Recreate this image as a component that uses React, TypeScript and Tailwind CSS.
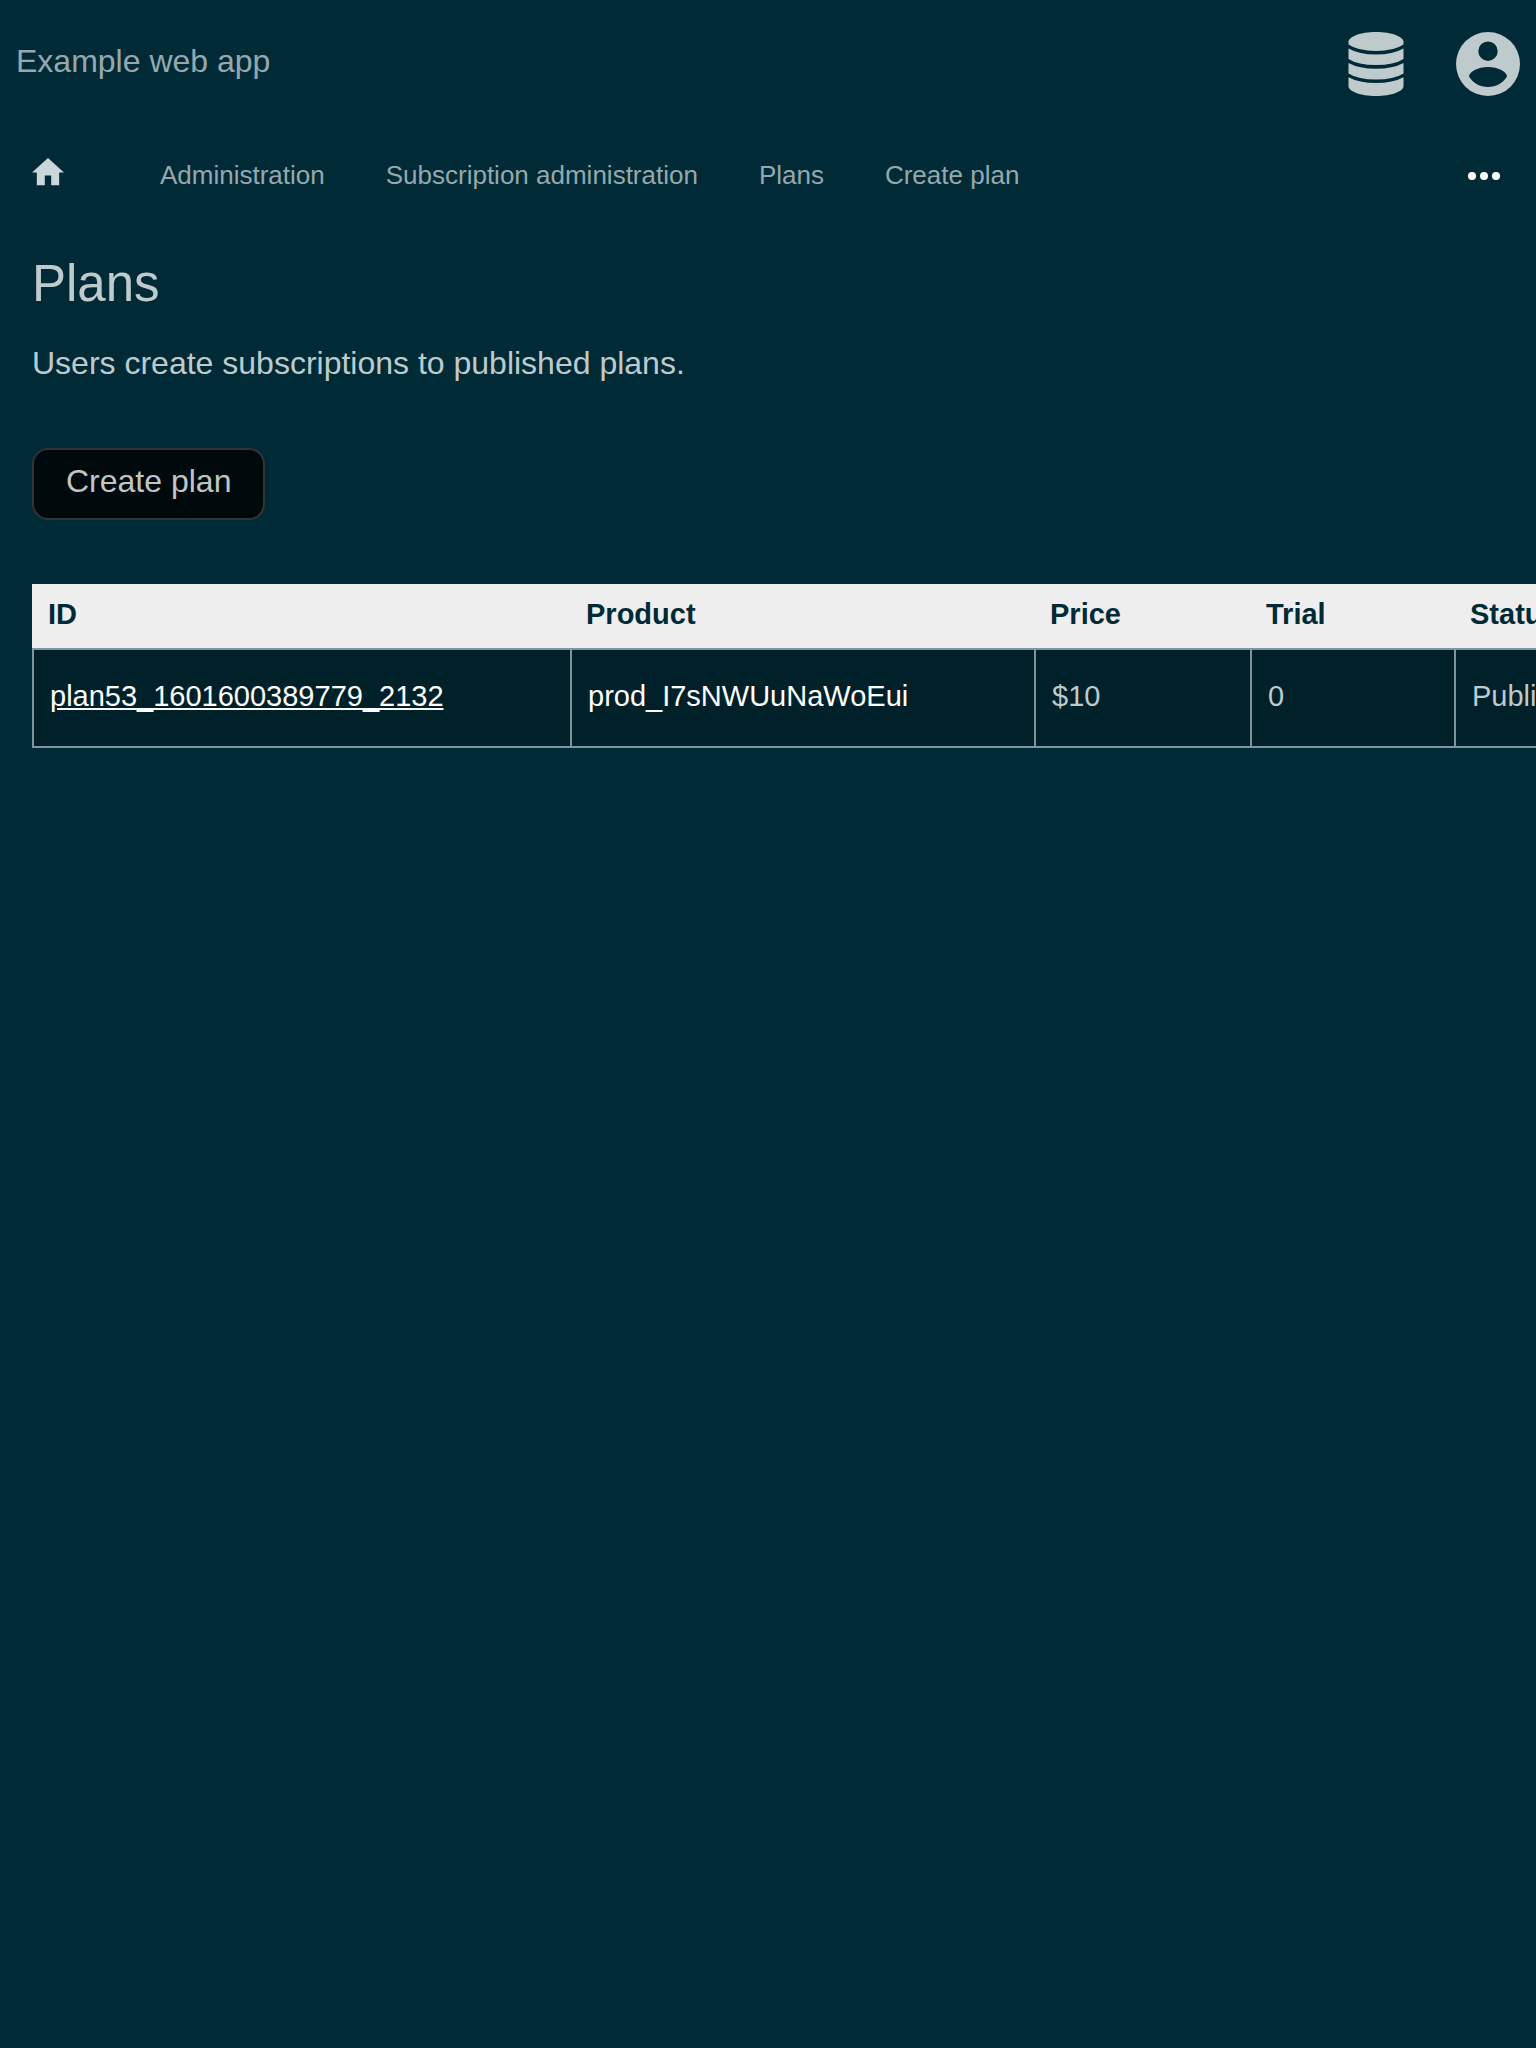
const navLinks = ["Administration", "Subscription administration", "Plans", "Create plan"];

function DatabaseIcon() {
  return (
    <svg viewBox="0 0 56 64" className="h-16 w-14" fill="currentColor" aria-hidden="true">
      <path d="M28 0C43.500 0 55.500 4.600 55.500 10V12.500Q46 19 28 19Q10 19 0.500 12.500V10C0.500 4.600 12.500 0 28 0Z" />
      <path d="M0.500 16.500Q11 22.500 28 22.500Q45 22.500 55.500 16.500V27Q46 33 28 33Q10 33 0.500 27Z" />
      <path d="M0.500 31Q11 36.800 28 36.800Q45 36.800 55.500 31V41.500Q46 47.500 28 47.500Q10 47.500 0.500 41.500Z" />
      <path d="M0.500 45.200Q11 51 28 51Q45 51 55.500 45.200V54C55.500 59.500 43.500 64 28 64C12.500 64 0.500 59.500 0.500 54Z" />
    </svg>
  );
}

function AccountIcon() {
  return (
    <svg viewBox="0 0 64 64" className="size-16" fill="currentColor" fillRule="evenodd" aria-hidden="true">
      <path d="M32 0A32 32 0 1 1 32 64A32 32 0 1 1 32 0ZM32 9.500A9.700 9.700 0 1 0 32 28.900A9.700 9.700 0 1 0 32 9.500ZM32 35C22 35 13 40 13 44.500C17 51 24 55 32 55C40 55 47 51 51 44.500C51 40 42 35 32 35Z" />
    </svg>
  );
}

function HomeIcon() {
  return (
    <svg viewBox="2 3 20 17" className="w-8" fill="currentColor" aria-hidden="true">
      <path d="M10 20v-6h4v6h5v-8h3L12 3 2 12h3v8z" />
    </svg>
  );
}

function MoreIcon() {
  return (
    <svg viewBox="0 0 32 8" className="w-8" fill="currentColor" aria-hidden="true">
      <circle cx="4" cy="4" r="4" />
      <circle cx="16" cy="4" r="4" />
      <circle cx="28" cy="4" r="4" />
    </svg>
  );
}

const columns = [
  { label: "ID", width: "w-[538px]" },
  { label: "Product", width: "w-[464px]" },
  { label: "Price", width: "w-[216px]" },
  { label: "Trial", width: "w-[204px]" },
  { label: "Status", width: "w-[240px]" },
];

const plans = [
  { id: "plan53_1601600389779_2132", product: "prod_I7sNWUuNaWoEui", price: "$10", trial: "0", status: "Published" },
];

const cell = "border-y-2 border-l-2 border-white/50 bg-[#00212a] bg-clip-padding px-4 pt-[29px] pb-[33px] last:border-r-2";

export default function App() {
  return (
    <div className="min-h-screen overflow-hidden bg-[#002b36] font-['Liberation_Sans',Arial,sans-serif] text-[32px] leading-[36px] text-[#bfcacd]">
      <header className="flex h-32 items-center justify-between px-4">
        <a href="#" className="pb-1.5 text-[#96a8ad]">Example web app</a>
        <div className="flex gap-[52px]">
          <button type="button" aria-label="Administration menu"><DatabaseIcon /></button>
          <button type="button" aria-label="Account menu"><AccountIcon /></button>
        </div>
      </header>

      <nav className="flex h-24 items-center gap-[61px] pr-9 pl-8 text-[26px] text-[#96a8ad]">
        <a href="#" aria-label="Home" className="mr-[35px] pb-2 text-[#ccd5d7]"><HomeIcon /></a>
        {navLinks.map((label) => (
          <a key={label} href="#" className="pb-0.5">{label}</a>
        ))}
        <button type="button" aria-label="More" className="ml-auto text-white"><MoreIcon /></button>
      </nav>

      <main className="pl-8">
        <h1 className="pt-8 text-[51px] leading-[56px]">Plans</h1>
        <p className="pt-[33px]">Users create subscriptions to published plans.</p>
        <button type="button" className="mt-[67px] block rounded-2xl border-2 border-[#333333] bg-[#000a0c] px-8 pt-[13px] pb-[19px] text-[#c2c5c6]">
          Create plan
        </button>

        <table className="mt-16 w-[1662px] table-fixed border-separate border-spacing-0 text-left text-[29px] leading-[34px]">
          <thead className="text-[#002b36]">
            <tr>
              {columns.map((c) => (
                <th key={c.label} scope="col" className={`${c.width} bg-[#eeeeee] px-4 pt-[13px] pb-[17px] font-bold`}>{c.label}</th>
              ))}
            </tr>
          </thead>
          <tbody>
            {plans.map((plan) => (
              <tr key={plan.id}>
                <td className={cell}><a href="#" className="text-white underline">{plan.id}</a></td>
                <td className={`${cell} text-white`}>{plan.product}</td>
                <td className={cell}>{plan.price}</td>
                <td className={cell}>{plan.trial}</td>
                <td className={cell}>{plan.status}</td>
              </tr>
            ))}
          </tbody>
        </table>
      </main>
    </div>
  );
}
